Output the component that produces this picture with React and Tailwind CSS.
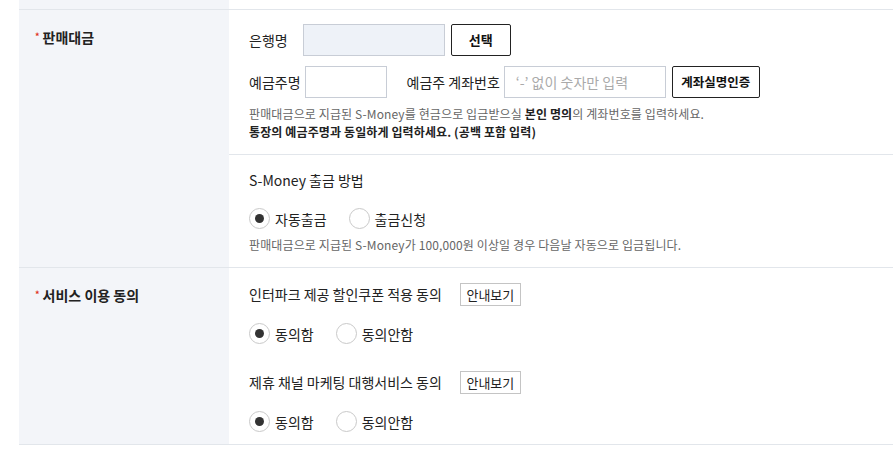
export default function App() {
  const font = { fontFamily: '"Noto Sans CJK KR", "Noto Sans", sans-serif' };

  function Radio({ checked, label, className = "" }) {
    return (
      <label className={`flex items-center ${className}`}>
        <span className="flex h-[21px] w-[21px] items-center justify-center rounded-full border border-[#c9c9c9] bg-white">
          {checked && <span className="h-[9px] w-[9px] rounded-full bg-[#333]" />}
        </span>
        <span className="ml-[5px] text-[14px] leading-[20px] text-[#222]">{label}</span>
      </label>
    );
  }

  function Label({ text }) {
    return (
      <div className="flex items-center pl-[16px] pt-[17px] text-[14px] font-bold leading-[20px] text-[#222]">
        <span className="mr-[3px] text-[9px] text-[#e0301e]">*</span>
        {text}
      </div>
    );
  }

  return (
    <div className="min-h-screen bg-white pl-[19px]" style={font}>
      {/* previous row end */}
      <div className="grid grid-cols-[210px_1fr]">
        <div className="h-[9px] bg-[#f3f5f9]" />
        <div className="h-[9px]" />
      </div>

      {/* 판매대금 */}
      <div className="grid grid-cols-[210px_1fr] border-t border-[#e2e6eb]">
        <div className="bg-[#f3f5f9]">
          <Label text="판매대금" />
        </div>
        <div>
          <div className="border-b border-[#e2e6eb] pb-[13px] pl-[20px] pt-[14px]">
            <div className="flex items-center">
              <span className="mr-[15px] text-[14px] text-[#222]">은행명</span>
              <div className="h-[32px] w-[142px] border border-[#c8cdd6] bg-[#eef2f8]" />
              <button className="ml-[6px] h-[32px] w-[60px] rounded-[2px] border border-[#222] bg-white text-[13px] font-bold text-[#111]">
                선택
              </button>
            </div>
            <div className="mt-[10px] flex items-center">
              <span className="mr-[4px] text-[14px] text-[#222]">예금주명</span>
              <div className="h-[32px] w-[82px] border border-[#c8cdd6] bg-white" />
              <span className="ml-[20px] mr-[4px] text-[14px] text-[#222]">예금주 계좌번호</span>
              <div className="flex h-[32px] w-[162px] items-center border border-[#c8cdd6] bg-white pl-[11px] text-[14px] text-[#aaa]">
                ‘-’ 없이 숫자만 입력
              </div>
              <button className="ml-[6px] h-[32px] w-[88px] rounded-[2px] border border-[#222] bg-white text-[12.5px] font-bold text-[#111]">
                계좌실명인증
              </button>
            </div>
            <p className="mt-[7px] text-[12px] leading-[18px] tracking-[0.01em] text-[#666]">
              판매대금으로 지급된 S-Money를 현금으로 입금받으실{" "}
              <b className="text-[#222]">본인 명의</b>의 계좌번호를 입력하세요.
            </p>
            <p className="text-[12px] font-bold leading-[18px] tracking-[0.01em] text-[#222]">
              통장의 예금주명과 동일하게 입력하세요. (공백 포함 입력)
            </p>
          </div>
          <div className="pb-[13px] pl-[20px] pt-[15px]">
            <div className="text-[14px] leading-[20px] text-[#222]">S-Money 출금 방법</div>
            <div className="mt-[18px] flex items-center">
              <Radio checked label="자동출금" />
              <Radio label="출금신청" className="ml-[22px]" />
            </div>
            <p className="mt-[7px] text-[12px] leading-[18px] tracking-[0.01em] text-[#666]">
              판매대금으로 지급된 S-Money가 100,000원 이상일 경우 다음날 자동으로 입금됩니다.
            </p>
          </div>
        </div>
      </div>

      {/* 서비스 이용 동의 */}
      <div className="grid grid-cols-[210px_1fr] border-y border-[#e2e6eb]">
        <div className="bg-[#f3f5f9]">
          <Label text="서비스 이용 동의" />
        </div>
        <div className="pb-[12px] pl-[20px] pt-[15px]">
          <div className="flex h-[23px] items-center">
            <span className="text-[14px] text-[#222]">인터파크 제공 할인쿠폰 적용 동의</span>
            <button className="ml-[18px] h-[23px] w-[61px] border border-[#c4c4c4] bg-white text-[13px] text-[#222]">
              안내보기
            </button>
          </div>
          <div className="mt-[17px] flex items-center">
            <Radio checked label="동의함" />
            <Radio label="동의안함" className="ml-[22px]" />
          </div>
          <div className="mt-[27px] flex h-[23px] items-center">
            <span className="text-[14px] text-[#222]">제휴 채널 마케팅 대행서비스 동의</span>
            <button className="ml-[18px] h-[23px] w-[61px] border border-[#c4c4c4] bg-white text-[13px] text-[#222]">
              안내보기
            </button>
          </div>
          <div className="mt-[17px] flex items-center">
            <Radio checked label="동의함" />
            <Radio label="동의안함" className="ml-[22px]" />
          </div>
        </div>
      </div>
    </div>
  );
}
